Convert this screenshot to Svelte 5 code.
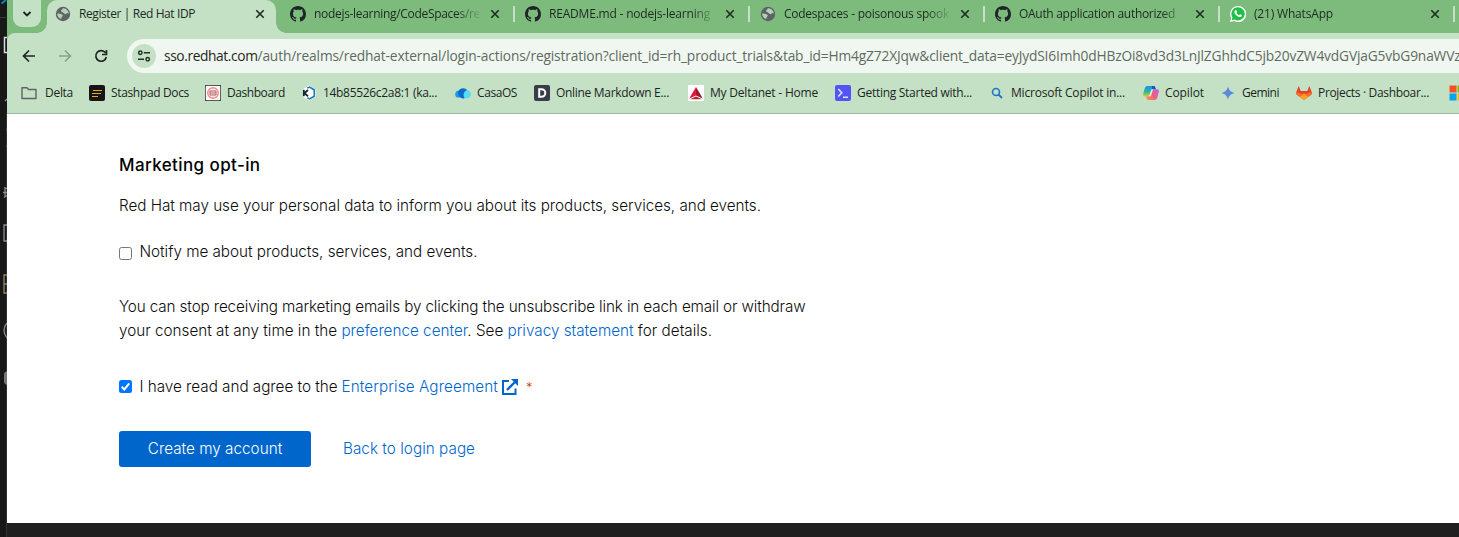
<script>
  const tabs = [
    { icon: 'globe', title: 'Register | Red Hat IDP', width: 116, active: true },
    { icon: 'github', title: 'nodejs-learning/CodeSpaces/re', width: 166 },
    { icon: 'github', title: 'README.md - nodejs-learning', width: 161 },
    { icon: 'globe', title: 'Codespaces - poisonous spook', width: 165 },
    { icon: 'github', title: 'OAuth application authorized', width: 156 },
    { icon: 'whatsapp', title: '(21) WhatsApp', width: 79 }
  ];

  const bookmarks = [
    { icon: 'folder', label: 'Delta', text: 28, slot: 68 },
    { icon: 'stashpad', label: 'Stashpad Docs', text: 78, slot: 116 },
    { icon: 'dashboard', label: 'Dashboard', text: 58, slot: 96 },
    { icon: 'kasm', label: '14b85526c2a8:1 (ka...', text: 114, slot: 154 },
    { icon: 'casa', label: 'CasaOS', text: 40, slot: 79 },
    { icon: 'dillinger', label: 'Online Markdown E...', text: 113, slot: 154 },
    { icon: 'delta', label: 'My Deltanet - Home', text: 108, slot: 147 },
    { icon: 'terminal', label: 'Getting Started with...', text: 115, slot: 154 },
    { icon: 'search', label: 'Microsoft Copilot in...', text: 114, slot: 154 },
    { icon: 'copilot', label: 'Copilot', text: 39, slot: 77 },
    { icon: 'gemini', label: 'Gemini', text: 37, slot: 76 },
    { icon: 'gitlab', label: 'Projects · Dashboar...', text: 111, slot: 153 },
    { icon: 'windows', label: '', text: 0, slot: 30 }
  ];

  // Tracks the text out (or in) so that a run occupies the given width.
  function fit(node, width) {
    const natural = node.getBoundingClientRect().width;
    const count = node.textContent.length;
    if (width && count) node.style.letterSpacing = `${(width - natural) / count}px`;
  }
</script>

{#snippet icon(name)}
  <svg class="icon" viewBox="0 0 16 16" width="16" height="16" aria-hidden="true">
    {#if name === 'globe'}
      <circle cx="8" cy="8" r="7.2" fill="#5f6368" />
      <path fill="#b4d2b6" d="M8.600 2.200c-1.600.3-1.200 1.500-2.200 2.100-.9.5-.4 1.500.5 1.400 1-.1.6 1.200 1.500 1.300.9 0 .9 1.200 2 1.200 1.200-.1 1.300-1.400 2.400-1.200.6.1.9.7 1 1.200C13.900 5.200 11.800 2.700 8.600 2.200zM2.200 7.600c1.300-.4 2.500 0 3.500.5.8.5 1.900.3 2.100 1.300.2.900-1.400.9-1.200 1.900.2.900-.3 1.700-1 1.500C3.500 12 2.200 10 2.200 7.600z" />
    {:else if name === 'github'}
      <path fill="#1f2428" d="M8 0C3.580 0 0 3.580 0 8c0 3.540 2.290 6.530 5.470 7.590.4.070.55-.17.55-.38 0-.19-.01-.82-.01-1.490-2.010.37-2.530-.49-2.690-.94-.09-.23-.48-.94-.82-1.130-.28-.15-.68-.52-.01-.53.63-.01 1.080.58 1.230.82.72 1.210 1.870.87 2.330.66.07-.52.28-.87.51-1.070-1.780-.2-3.640-.89-3.640-3.950 0-.87.31-1.590.82-2.150-.08-.2-.36-1.020.08-2.120 0 0 .67-.21 2.200.82.64-.18 1.320-.27 2-.27s1.360.09 2 .27c1.530-1.040 2.200-.82 2.200-.82.44 1.100.16 1.920.08 2.120.51.56.82 1.270.82 2.150 0 3.070-1.870 3.750-3.650 3.950.29.25.54.73.54 1.480 0 1.070-.01 1.930-.01 2.200 0 .21.15.46.55.38A8.010 8.010 0 0 0 16 8c0-4.420-3.580-8-8-8z" />
    {:else if name === 'whatsapp'}
      <path fill="#fff" d="M8 0a8 8 0 0 0-6.900 11.900L0 16l4.200-1.100A8 8 0 1 0 8 0z" />
      <path fill="#1dc143" d="M8.100 1.300a6.600 6.600 0 0 0-5.600 10.200l-.7 2.700 2.800-.7A6.600 6.600 0 1 0 8.100 1.300z" />
      <path fill="#fff" d="M5.500 4.200c.4-.3.900-.1 1.100.4l.5 1.200c.1.300-.5.800-.5 1.100.5 1 1.400 1.800 2.500 2.200.3 0 .8-.9 1.100-.8l1.500.8c.4.300 0 1.300-.4 1.600-1 .8-2.400.3-3.500-.3-1.400-.8-2.600-2-3.300-3.500-.4-1-.1-2 1-2.700z" />
    {:else if name === 'folder'}
      <path d="M1 2.800h5l1.500 1.700H15v9H1z" fill="none" stroke="#5f6368" stroke-width="1.400" stroke-linejoin="round" />
    {:else if name === 'stashpad'}
      <rect width="16" height="16" rx="2" fill="#151515" />
      <path d="M4 5.500h9M3 8.500h9M3 11.500h6" stroke="#efa51c" stroke-width="1.200" />
    {:else if name === 'dashboard'}
      <rect width="16" height="16" rx="1" fill="#222" />
      <rect x=".7" y=".7" width="14.600" height="14.600" rx="1" fill="#fff" />
      <circle cx="8" cy="8" r="5.300" fill="#fbe4e4" stroke="#f08c8c" stroke-width="1.400" />
      <path d="M5 6h6v4H5zM5 8h6" fill="none" stroke="#b06a6a" />
    {:else if name === 'kasm'}
      <path d="M8 .5l6.300 3.700v7.600L8 15.500l-6.300-3.700V4.200z" fill="#fff" />
      <path d="M6.200 3.200L8.500 2l4.700 2.800v6.400L8.500 14l-2.300-1.200" fill="none" stroke="#1879b8" stroke-width="1.500" />
      <path d="M2.800 4.800v6.500M7 5L3.500 8 7 11.300" fill="none" stroke="#16222c" stroke-width="1.800" />
    {:else if name === 'casa'}
      <circle cx="11.800" cy="9.300" r="4" fill="#53dcfc" />
      <circle cx="3.600" cy="9.200" r="3.400" fill="#1b9bea" />
      <path d="M3 8.500A5.200 5.200 0 0 1 12.300 5.300C9 5.800 7.400 9.800 9.700 13.200 6.500 14.200 3.500 12 3 8.500z" fill="#0b6dcb" />
    {:else if name === 'dillinger'}
      <rect width="16" height="16" rx="2" fill="#373d49" />
      <path d="M5.200 4.200h2.300a3.800 3.800 0 0 1 0 7.600H5.200z" fill="none" stroke="#fff" stroke-width="2" />
    {:else if name === 'delta'}
      <rect width="16" height="16" fill="#fff" />
      <path d="M8 2L1.200 13.500 8 10.500z" fill="#e51937" />
      <path d="M8 2l6.800 11.500L8 10.500z" fill="#991933" />
      <path d="M8 11.400l6 2.900H2z" fill="#c01933" />
    {:else if name === 'terminal'}
      <rect width="16" height="16" rx="2" fill="#5552f7" />
      <path d="M3.300 4l3.500 3.800-3.500 3.700M8 12.200h5" fill="none" stroke="#d9e6ff" stroke-width="1.600" />
    {:else if name === 'search'}
      <circle cx="7" cy="7" r="3.500" fill="none" stroke="#1b76c9" stroke-width="1.600" />
      <path d="M9.500 9.500l3.500 3.500" stroke="#1b76c9" stroke-width="1.800" />
    {:else if name === 'copilot'}
      <defs>
        <linearGradient id="cpA" x1="0" y1="0" x2="0" y2="1"><stop offset="0" stop-color="#1993ee" /><stop offset=".55" stop-color="#29b5a0" /><stop offset="1" stop-color="#e7c923" /></linearGradient>
        <linearGradient id="cpB" x1="1" y1="0" x2="0" y2="1"><stop offset="0" stop-color="#b565df" /><stop offset=".5" stop-color="#ee5c87" /><stop offset="1" stop-color="#fc963c" /></linearGradient>
      </defs>
      <path d="M4.500 1h6c1.200 0 1.500.6 1.800 1.700l.5 1.600H9.500c-1 0-1.500.6-1.800 1.600L6.500 9.700C6.100 11 5.500 11.500 4.300 11.500H2C.4 11.500-.2 10.300.2 8.800l1.600-5.600C2.300 1.600 3.200 1 4.500 1z" fill="url(#cpA)" />
      <path d="M8.500 1h2c1.200 0 1.500.6 1.800 1.700l.5 1.600H9.500z" fill="#1356ba" />
      <path d="M11.500 15h-6c-1.200 0-1.500-.6-1.800-1.700l-.5-1.800h3.300c1 0 1.500-.6 1.800-1.600l1.200-3.800C9.900 4.800 10.500 4.300 11.700 4.300H14c1.600 0 2.200 1.200 1.800 2.700l-1.600 5.800c-.5 1.600-1.400 2.200-2.700 2.200z" fill="url(#cpB)" />
      <path d="M6.700 10.200l2-5.200c.2-.5.500-.7.900-.7l-.4 1.500-1.500 4.700c-.2.500-.5.900-1 1z" fill="#e8f2e8" />
    {:else if name === 'gemini'}
      <defs><linearGradient id="gem"><stop offset="0" stop-color="#6a86d2" /><stop offset="1" stop-color="#4b8be0" /></linearGradient></defs>
      <path d="M8 1.300C8.900 5.300 10.700 7.100 14.700 8 10.700 8.900 8.900 10.700 8 14.700 7.100 10.700 5.300 8.900 1.300 8 5.300 7.100 7.100 5.300 8 1.300z" fill="url(#gem)" />
    {:else if name === 'gitlab'}
      <path d="M8 15L.6 9.400C0 8.900-.1 8 .2 7.300L2.700 1l2 5h6.600l2-5 2.500 6.300c.3.700.2 1.600-.4 2.100z" fill="#e24329" />
      <path d="M8 15L3.500 11.600 8 8.200l4.500 3.400z" fill="#fca326" />
      <path d="M3.500 11.600L.6 9.400C0 8.900-.1 8 .2 7.300c2.200.1 4.900 1 7.800 3.300 2.900-2.300 5.600-3.200 7.800-3.300.3.700.2 1.600-.4 2.100l-2.900 2.200L8 9.500z" fill="#fc6d26" />
    {:else if name === 'windows'}
      <path d="M.5.500h7v7h-7z" fill="#f25022" /><path d="M8.500.5h7v7h-7z" fill="#7fba00" />
      <path d="M.5 8.500h7v7h-7z" fill="#00a4ef" /><path d="M8.500 8.500h7v7h-7z" fill="#ffb900" />
    {/if}
  </svg>
{/snippet}

<div class="screen">
  <svg class="dock" width="7" height="537" viewBox="0 0 7 537" aria-hidden="true">
    <path fill="#181818" d="M0 0h7v537H0z" />
    <path stroke="#3a3a3a" d="M0 17.500h6" />
    <path stroke="#333" d="M6.500 113v424" />
    <path stroke="#0f7fca" stroke-width="2" d="M1.500 3.500L6 0" />
    <path d="M7 37.500H4.500v15H7" fill="none" stroke="#d5dae2" stroke-width="1.500" />
    <g fill="none" stroke="#8a8f96" stroke-width="1.300">
      <path d="M5 101l2-2M7 188.500l-3-1m0 10l3-2m-4-3h4M5 188v9M7 225H4v16H7M7 323q-6 7 0 15" />
      <path stroke="#9a8468" d="M7 275H4v18H7M4 284h3" />
    </g>
    <path fill="#27557c" d="M6 128h1v3H6zM6 145h1v3H6z" />
    <path fill="#777" d="M7 371q-3 1-3 3v8q0 2 3 3z" />
  </svg>

  <div class="window">
    <div class="tabstrip">
      <button class="tabsearch" aria-label="Search tabs">
        <svg width="10" height="10" viewBox="0 0 10 10"><path d="M1.500 3l3.500 3.500L8.500 3" fill="none" stroke="#1c251e" stroke-width="1.800" /></svg>
      </button>
      {#each tabs as tab}
        <div class="tab" class:active={tab.active}>
          {@render icon(tab.icon)}
          <span class="title"><span class="run" use:fit={tab.width}>{tab.title}</span></span>
          <svg class="close" width="10" height="10" viewBox="0 0 10 10"><path d="M1.300 1.300l7.400 7.400M8.700 1.300L1.300 8.700" stroke="#1e2b20" stroke-width="1.600" /></svg>
        </div>
      {/each}
    </div>

    <div class="toolbar">
      <svg class="nav" width="16" height="16" viewBox="0 0 16 16"><path d="M14 8H3M8 2.500L2.500 8 8 13.500" fill="none" stroke="#202722" stroke-width="1.700" /></svg>
      <svg class="nav" width="16" height="16" viewBox="0 0 16 16"><path d="M2 8h11M8 2.500L13.500 8 8 13.500" fill="none" stroke="#8ba18c" stroke-width="1.600" /></svg>
      <svg class="nav" width="16" height="16" viewBox="0 0 16 16"><path d="M12.400 4.800A5.300 5.300 0 1 0 13.300 9M13.500 2v4.500H9" fill="none" stroke="#202722" stroke-width="1.700" /></svg>
      <div class="address">
        <span class="site">
          <svg width="14" height="14" viewBox="0 0 14 14" fill="none" stroke="#253128" stroke-width="1.500"><circle cx="3.300" cy="3.800" r="1.700" /><path d="M6.800 3.800H13M1 10.300h6" /><circle cx="10.700" cy="10.300" r="1.700" /></svg>
        </span>
        <span class="url"><span class="run host" use:fit={93.5}>sso.redhat.com</span><span class="run" use:fit={1203}>/auth/realms/redhat-external/login-actions/registration?client_id=rh_product_trials&amp;tab_id=Hm4gZ72XJqw&amp;client_data=eyJydSI6Imh0dHBzOi8vd3d3LnJlZGhhdC5jb20vZW4vdGVjaG5vbG9naWVz</span></span>
      </div>
    </div>

    <div class="bookmarks">
      {#each bookmarks as mark}
        <div class="bookmark" style:width="{mark.slot}px">
          {@render icon(mark.icon)}
          <span class="run" use:fit={mark.text}>{mark.label}</span>
        </div>
      {/each}
    </div>

    <main>
      <h2><span class="run" use:fit={141.5}>Marketing opt-in</span></h2>
      <p class="intro"><span class="run" use:fit={642}>Red Hat may use your personal data to inform you about its products, services, and events.</span></p>
      <label class="check notify">
        <span class="box"></span>
        <span class="run" use:fit={338}>Notify me about products, services, and events.</span>
      </label>
      <p class="consent">
        <span class="run" use:fit={686.5}>You can stop receiving marketing emails by clicking the unsubscribe link in each email or withdraw</span><br />
        <span class="run" use:fit={593}>your consent at any time in the <a href="#preferences">preference center</a>. See <a href="#privacy">privacy statement</a> for details.</span>
      </p>
      <label class="check agree">
        <span class="box on"><svg width="13" height="13" viewBox="0 0 13 13"><path d="M2.700 6.800l2.600 2.600 5-6" fill="none" stroke="#fff" stroke-width="2" /></svg></span>
        <span class="agreement"><span class="run" use:fit={198}>I have read and agree to the</span><a class="run" href="#agreement" use:fit={156.5}>Enterprise Agreement</a></span>
        <svg class="external" width="16" height="16" viewBox="0 0 16 16"><path d="M7 2H1v13h12.500V9.500" fill="none" stroke="#06c" stroke-width="2" /><path d="M5 11l8-8" stroke="#06c" stroke-width="2.400" /><path d="M9 0h7v7z" fill="#06c" /></svg>
        <span class="required">*</span>
      </label>
      <div class="actions">
        <button class="primary"><span class="run" use:fit={134.5}>Create my account</span></button>
        <a href="#login"><span class="run" use:fit={132}>Back to login page</span></a>
      </div>
    </main>
    <footer></footer>
  </div>
</div>

<style>
  :global(body) { margin: 0; overflow: hidden; }
  .screen {
    display: flex;
    width: 1459px;
    height: 537px;
    overflow: hidden;
    background: #181818;
    font-family: "Open Sans", "Noto Sans", sans-serif;
  }
  .dock, .icon { display: block; flex: none; }
  .window { display: flex; flex-direction: column; flex: none; width: 1452px; background: #7dbb7d; }
  .run { display: inline-block; white-space: pre; }
  button { border: 0; padding: 0; font: inherit; }
  .tabstrip { display: flex; flex: none; height: 33px; font-size: 12px; color: #1c2a1f; }
  .tabsearch {
    display: grid; place-items: center; flex: none;
    width: 28px; height: 27px; margin: 0 0 0 6px;
    border-radius: 0 0 9px 9px; background: #c5e1c5;
  }
  .tab {
    position: relative; box-sizing: border-box; flex: none;
    display: flex; align-items: center;
    width: 235px; height: 27px; padding-left: 14px;
  }
  .tab:not(.active)::after { content: ""; flex: none; width: 2px; height: 16px; margin-left: 13px; background: #c5e1c5; }
  .tab.active { width: 229px; height: 33px; margin-left: 6px; padding: 0 0 6px 8px; border-radius: 10px 10px 0 0; background: #c5e1c5; }
  .tab.active::before, .tab.active::after {
    content: ""; position: absolute; bottom: 0; width: 10px; height: 10px;
  }
  .tab.active::before { left: -10px; background: radial-gradient(circle at 0 0, transparent 9.500px, #c5e1c5 10px); }
  .tab.active::after { right: -10px; background: radial-gradient(circle at 100% 0, transparent 9.500px, #c5e1c5 10px); }
  .title {
    flex: none; width: 167px; margin-left: 8px; overflow: hidden; line-height: 18px;
    -webkit-mask-image: linear-gradient(90deg, #000 142px, transparent 168px);
  }
  .tab.active .title { width: 176px; -webkit-mask-image: none; }
  .close { display: block; flex: none; margin-left: 9px; }
  .tab.active .close { margin-left: 0; }
  .toolbar {
    display: flex; align-items: center; flex: none; height: 46px;
    padding-left: 14px; border-radius: 8px 0 0 0; background: #c5e1c5;
  }
  .nav { display: block; flex: none; margin-right: 20px; }
  .address {
    display: flex; align-items: center; flex: 1; min-width: 0; height: 34px;
    padding-left: 5px; margin-left: -2px; border-radius: 17px 0 0 17px; background: #f0f7f0; overflow: hidden;
  }
  .site { display: grid; place-items: center; flex: none; width: 24px; height: 24px; border-radius: 50%; background: #c5e1c5; }
  .site svg { display: block; }
  .url { margin: 0 0 1px 8px; white-space: nowrap; font-size: 13.750px; line-height: 19px; color: #5f6b62; }
  .host { color: #1f2621; }
  .bookmarks {
    display: flex; align-items: center; box-sizing: border-box; flex: none; height: 35px;
    padding: 0 0 6px 14px; overflow: hidden; border-bottom: 1px solid #9fb59f;
    background: #c5e1c5; font-size: 12px; line-height: 16px; color: #1c251e;
  }
  .bookmark { display: flex; align-items: center; gap: 6px; flex: none; }
  .bookmark:first-child { gap: 8px; }
  main {
    box-sizing: border-box; flex: none; height: 409px; padding: 39px 0 0 112px;
    background: #fff; color: #0c0c0c; font: 350 15.250px/24px Inter, sans-serif;
  }
  h2 { margin: 0; font-size: 17px; font-weight: 550; line-height: 24px; color: #000; }
  p { margin: 0; }
  .intro { margin-top: 17px; }
  .check { display: flex; align-items: center; height: 24px; }
  .notify { margin-top: 22px; }
  .consent { margin-top: 31px; }
  .agree { margin-top: 32px; }
  .box { box-sizing: border-box; flex: none; width: 13px; height: 13px; margin: 2px 7.500px 0 0; border: 1px solid #767676; border-radius: 2.500px; }
  .box.on { margin-top: -1px; border: 0; background: #0075ff; }
  .box svg, .external { display: block; }
  a { color: #06c; text-decoration: none; }
  .agreement { display: flex; gap: 4px; }
  .external { margin: -1px 0 0 4px; }
  .required { margin-left: 8px; font-size: 13px; color: #c9400b; }
  .actions { display: flex; align-items: center; gap: 32px; margin-top: 32px; }
  .primary { width: 192px; height: 36px; border-radius: 3px; background: #06c; color: #fff; }
  footer { flex: none; height: 14px; background: #1f1f1f; }
</style>
